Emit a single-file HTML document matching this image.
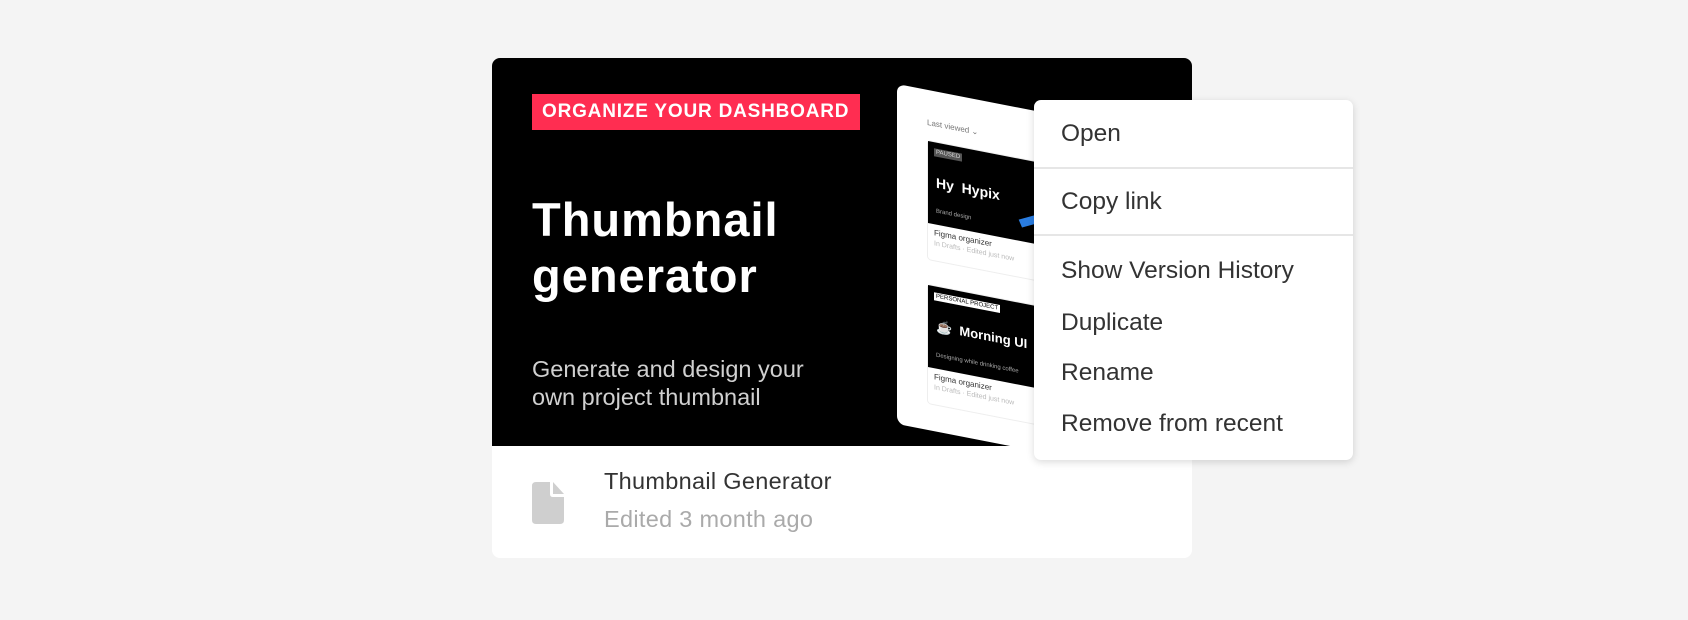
<!DOCTYPE html>
<html><head><meta charset="utf-8"><style>
*{margin:0;padding:0;box-sizing:border-box}
body{width:1688px;height:620px;background:#f4f4f4;font-family:"Liberation Sans",sans-serif;position:relative;overflow:hidden}
.card{position:absolute;left:492px;top:58px;width:700px;height:500px;background:#fff;border-radius:8px;overflow:hidden}
.thumb{position:absolute;left:0;top:0;width:700px;height:388px;background:#000;overflow:hidden}
.badge{position:absolute;left:40px;top:36px;width:328px;height:36px;background:#ff2d51;color:#fff;font-weight:bold;font-size:19px;line-height:36px;padding-left:10px;letter-spacing:0.8px}
.h1{position:absolute;left:40px;top:134px;color:#fff;font-weight:bold;font-size:47px;line-height:56px;letter-spacing:1px}
.sub{position:absolute;left:40px;top:297px;color:#d0d0d0;font-size:23.5px;line-height:28px}
.panel{position:absolute;left:405px;top:26px;width:220px;height:340px;background:#fff;border-radius:8px;transform:skewY(11deg);transform-origin:0 0}
.lv{position:absolute;left:30px;top:28px;font-size:8px;color:#777}
.mc{position:absolute;left:30px;width:170px;height:120px;border:1px solid #eee;border-radius:4px}
.mc .b{position:absolute;left:0;top:0;width:100%;height:82px;background:#000}
.mc .t{position:absolute;left:6px;top:86px;font-size:8px;color:#333}
.mc .t2{position:absolute;left:6px;top:98px;font-size:7px;color:#bbb}
.foot{position:absolute;left:0;top:388px;width:700px;height:112px}
.ft{position:absolute;left:112px;top:22px;font-size:23.5px;color:#333;letter-spacing:0.3px}
.fs{position:absolute;left:112px;top:60px;font-size:23.5px;color:#aaa;letter-spacing:0.3px}
.menu{position:absolute;left:1034px;top:100px;width:319px;height:360px;background:#fff;border-radius:7px;box-shadow:0 2px 8px rgba(0,0,0,.15)}
.mi{position:absolute;left:27px;font-size:24.5px;color:#333}
.dv{position:absolute;left:0;width:100%;height:2px;background:#e6e6e6}
</style></head><body>
<div class="card">
 <div class="thumb">
  <div class="badge">ORGANIZE YOUR DASHBOARD</div>
  <div class="h1">Thumbnail<br>generator</div>
  <div class="sub">Generate and design your<br>own project thumbnail</div>
  <div class="panel">
   <div class="lv">Last viewed ⌄</div>
   <div class="mc" style="top:50px"><div class="b"><span style="position:absolute;left:6px;top:6px;font-size:6px;background:#555;color:#ddd;padding:1px 2px">PAUSED</span><span style="position:absolute;left:8px;top:32px;color:#fff;font-weight:bold;font-size:14px">Hy&nbsp; Hypix</span><span style="position:absolute;left:8px;top:66px;color:#aaa;font-size:6px">Brand design</span><span style="position:absolute;left:90px;top:50px;width:50px;height:8px;background:#2a7de1;transform:rotate(-25deg)"></span></div><div class="t">Figma organizer</div><div class="t2">In Drafts · Edited just now</div></div>
   <div class="mc" style="top:194px"><div class="b"><span style="position:absolute;left:6px;top:6px;font-size:6px;background:#fff;color:#000;padding:1px 2px">PERSONAL PROJECT</span><span style="position:absolute;left:8px;top:32px;color:#fff;font-weight:bold;font-size:13px">☕&nbsp; Morning UI</span><span style="position:absolute;left:8px;top:66px;color:#aaa;font-size:6px">Designing while drinking coffee</span></div><div class="t">Figma organizer</div><div class="t2">In Drafts · Edited just now</div></div>
  </div>
 </div>
 <div class="foot">
  <svg style="position:absolute;left:40px;top:36px" width="32" height="42" viewBox="0 0 32 42"><path d="M4 0H18V12Q18 15 21 15H32V38Q32 42 28 42H4Q0 42 0 38V4Q0 0 4 0Z" fill="#cfcfcf"/><path d="M21 0L32 12H21Z" fill="#cfcfcf"/></svg>
  <div class="ft">Thumbnail Generator</div>
  <div class="fs">Edited 3 month ago</div>
 </div>
</div>
<div class="menu">
 <div class="mi" style="top:20px">Open</div>
 <div class="dv" style="top:67px"></div>
 <div class="mi" style="top:88px">Copy link</div>
 <div class="dv" style="top:134px"></div>
 <div class="mi" style="top:157px">Show Version History</div>
 <div class="mi" style="top:209px">Duplicate</div>
 <div class="mi" style="top:259px">Rename</div>
 <div class="mi" style="top:310px">Remove from recent</div>
</div>
</body></html>
